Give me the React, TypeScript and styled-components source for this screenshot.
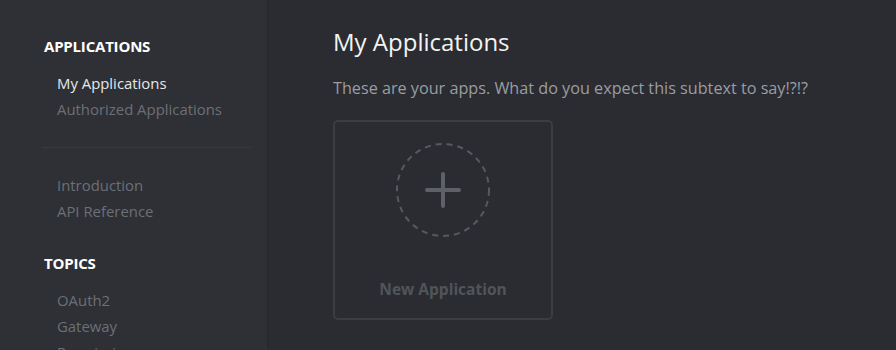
import React from 'react'
import styled, { createGlobalStyle } from 'styled-components'

const GlobalStyle = createGlobalStyle`
  html, body {
    margin: 0;
    padding: 0;
    background: #2a2c31;
    font-family: 'Open Sans', 'Noto Sans', sans-serif;
  }
`

const Root = styled.div`
  display: flex;
  height: 350px;
  overflow: hidden;
  background: #2a2c31;
`

const Sidebar = styled.nav`
  width: 268px;
  flex-shrink: 0;
  background: #2e3035;
  border-right: 1px solid #25272b;
  padding: 37px 16px 0 42px;
  box-sizing: border-box;
`

const SectionTitle = styled.h2`
  margin: 0 0 15px 2px;
  font-size: 15px;
  font-weight: 700;
  color: #ffffff;
  text-transform: uppercase;
  line-height: 18px;
  letter-spacing: -0.2px;
`

const NavList = styled.ul`
  list-style: none;
  margin: 0;
  padding: 0 0 0 15px;
  display: flex;
  flex-direction: column;
`

const NavItem = styled.li<{ $active?: boolean }>`
  font-size: 14.9px;
  line-height: 26px;
  color: ${p => (p.$active ? '#e6e7e8' : '#6c6f75')};
`

const Divider = styled.hr`
  border: none;
  border-top: 1px solid #383a3f;
  margin: 25px 0 24px 0;
`

const Group = styled.div`
  margin-bottom: 30px;
`

const Main = styled.main`
  flex: 1;
  padding: 26px 0 0 65px;
`

const Title = styled.h1`
  margin: 0;
  font-size: 24px;
  font-weight: 400;
  color: #f2f3f4;
  line-height: 32px;
`

const Subtext = styled.p`
  margin: 18px 0 0 0;
  font-size: 16.2px;
  color: #9a9da2;
  line-height: 24px;
`

const NewCard = styled.button`
  margin-top: 20px;
  width: 220px;
  height: 200px;
  box-sizing: border-box;
  border: 2px solid #3b3d42;
  border-radius: 5px;
  background: transparent;
  display: flex;
  flex-direction: column;
  align-items: center;
  padding: 20px 0 0 0;
  font-family: inherit;
  cursor: pointer;
`

const CardLabel = styled.span`
  margin-top: 40px;
  font-size: 15.5px;
  font-weight: 700;
  color: #51545a;
`

const PlusCircle = () => (
  <svg width="96" height="96" viewBox="0 0 96 96">
    <circle cx="48" cy="48" r="46" fill="none" stroke="#56595f" strokeWidth="2" strokeDasharray="6 5" />
    <path d="M48 32 V64 M32 48 H64" stroke="#5e6167" strokeWidth="4" strokeLinecap="round" />
  </svg>
)

export default function App() {
  return (
    <Root>
      <GlobalStyle />
      <Sidebar>
        <SectionTitle>Applications</SectionTitle>
        <NavList>
          <NavItem $active>My Applications</NavItem>
          <NavItem>Authorized Applications</NavItem>
        </NavList>
        <Divider />
        <Group>
          <NavList>
            <NavItem>Introduction</NavItem>
            <NavItem>API Reference</NavItem>
          </NavList>
        </Group>
        <SectionTitle>Topics</SectionTitle>
        <NavList>
          <NavItem>OAuth2</NavItem>
          <NavItem>Gateway</NavItem>
          <NavItem>Permissions</NavItem>
        </NavList>
      </Sidebar>
      <Main>
        <Title>My Applications</Title>
        <Subtext>These are your apps. What do you expect this subtext to say!?!?</Subtext>
        <NewCard>
          <PlusCircle />
          <CardLabel>New Application</CardLabel>
        </NewCard>
      </Main>
    </Root>
  )
}
